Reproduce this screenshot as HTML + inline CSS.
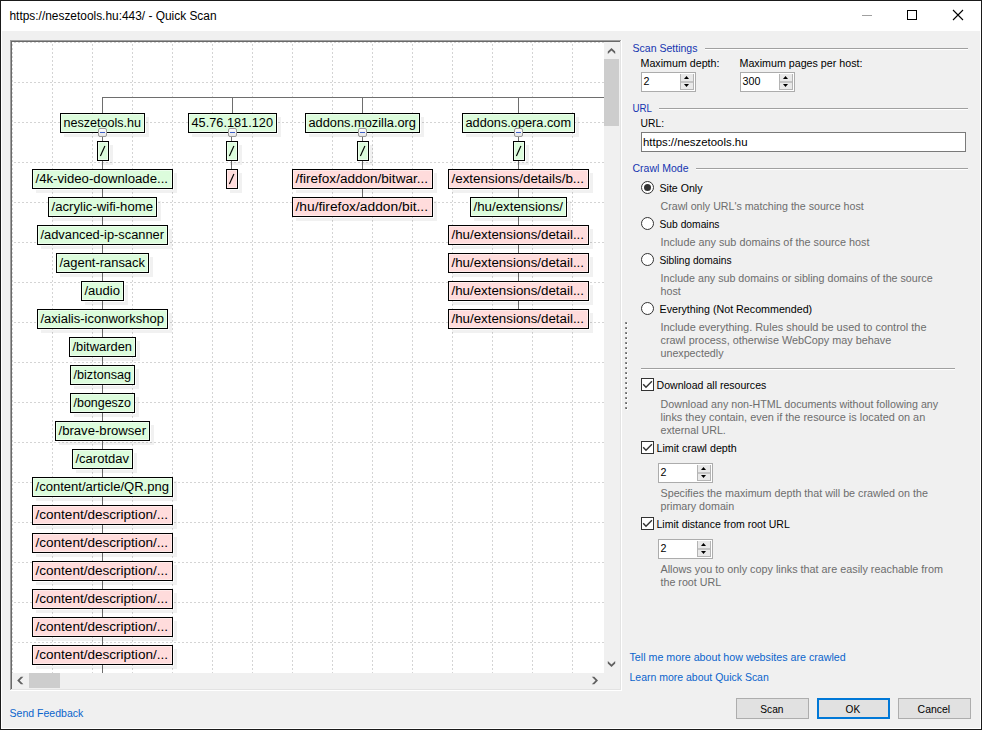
<!DOCTYPE html>
<html><head><meta charset="utf-8"><title>Quick Scan</title>
<style>
html,body{margin:0;padding:0;background:#f0f0f0;width:982px;height:730px;overflow:hidden}
svg{display:block}
text{font-family:"Liberation Sans", sans-serif;white-space:pre}
</style></head><body>
<svg width="982" height="730" viewBox="0 0 982 730" font-family='"Liberation Sans", sans-serif'>
<defs><linearGradient id="cbg" x1="0" y1="0" x2="0" y2="1"><stop offset="0" stop-color="#ffffff"/><stop offset="1" stop-color="#e4e4e4"/></linearGradient></defs>
<rect x="0" y="0" width="982" height="730" fill="#f0f0f0"/>
<g font-size="12"><rect x="12" y="42" width="608" height="647" fill="#fff"/><g stroke="#d4d4d4" stroke-width="1" stroke-dasharray="2 2" stroke-dashoffset="2"><line x1="12.5" y1="42" x2="12.5" y2="673" /><line x1="52.5" y1="42" x2="52.5" y2="673" /><line x1="92.5" y1="42" x2="92.5" y2="673" /><line x1="132.5" y1="42" x2="132.5" y2="673" /><line x1="172.5" y1="42" x2="172.5" y2="673" /><line x1="212.5" y1="42" x2="212.5" y2="673" /><line x1="252.5" y1="42" x2="252.5" y2="673" /><line x1="292.5" y1="42" x2="292.5" y2="673" /><line x1="332.5" y1="42" x2="332.5" y2="673" /><line x1="372.5" y1="42" x2="372.5" y2="673" /><line x1="412.5" y1="42" x2="412.5" y2="673" /><line x1="452.5" y1="42" x2="452.5" y2="673" /><line x1="492.5" y1="42" x2="492.5" y2="673" /><line x1="532.5" y1="42" x2="532.5" y2="673" /><line x1="572.5" y1="42" x2="572.5" y2="673" /><line x1="12" y1="42.5" x2="604" y2="42.5" /><line x1="12" y1="82.5" x2="604" y2="82.5" /><line x1="12" y1="122.5" x2="604" y2="122.5" /><line x1="12" y1="162.5" x2="604" y2="162.5" /><line x1="12" y1="202.5" x2="604" y2="202.5" /><line x1="12" y1="242.5" x2="604" y2="242.5" /><line x1="12" y1="282.5" x2="604" y2="282.5" /><line x1="12" y1="322.5" x2="604" y2="322.5" /><line x1="12" y1="362.5" x2="604" y2="362.5" /><line x1="12" y1="402.5" x2="604" y2="402.5" /><line x1="12" y1="442.5" x2="604" y2="442.5" /><line x1="12" y1="482.5" x2="604" y2="482.5" /><line x1="12" y1="522.5" x2="604" y2="522.5" /><line x1="12" y1="562.5" x2="604" y2="562.5" /><line x1="12" y1="602.5" x2="604" y2="602.5" /><line x1="12" y1="642.5" x2="604" y2="642.5" /></g><rect x="102" y="97" width="502" height="1" fill="#6e6e6e"/><rect x="102" y="97" width="1" height="16" fill="#6e6e6e"/><rect x="232" y="97" width="1" height="16" fill="#6e6e6e"/><rect x="362" y="97" width="1" height="16" fill="#6e6e6e"/><rect x="518" y="97" width="1" height="16" fill="#6e6e6e"/><rect x="102" y="133" width="1" height="540" fill="#6e6e6e"/><rect x="231" y="133" width="1" height="40" fill="#6e6e6e"/><rect x="362" y="133" width="1" height="70" fill="#6e6e6e"/><rect x="518" y="133" width="1" height="180" fill="#6e6e6e"/><rect x="146" y="117" width="3" height="20" fill="#000" fill-opacity="0.055"/><rect x="64" y="134" width="82" height="3" fill="#000" fill-opacity="0.055"/><rect x="60" y="113" width="85" height="20" fill="#000"/><rect x="61" y="114" width="83" height="18" fill="#ecfeec"/><rect x="62" y="115" width="81" height="16" fill="#dcfcdc"/><text x="63.5" y="127" textLength="77.5" lengthAdjust="spacingAndGlyphs">neszetools.hu</text><rect x="278" y="117" width="3" height="20" fill="#000" fill-opacity="0.055"/><rect x="192" y="134" width="86" height="3" fill="#000" fill-opacity="0.055"/><rect x="188" y="113" width="89" height="20" fill="#000"/><rect x="189" y="114" width="87" height="18" fill="#ecfeec"/><rect x="190" y="115" width="85" height="16" fill="#dcfcdc"/><text x="191.5" y="127" textLength="81.5" lengthAdjust="spacingAndGlyphs">45.76.181.120</text><rect x="421" y="117" width="3" height="20" fill="#000" fill-opacity="0.055"/><rect x="309" y="134" width="112" height="3" fill="#000" fill-opacity="0.055"/><rect x="305" y="113" width="115" height="20" fill="#000"/><rect x="306" y="114" width="113" height="18" fill="#ecfeec"/><rect x="307" y="115" width="111" height="16" fill="#dcfcdc"/><text x="308.5" y="127" textLength="107.5" lengthAdjust="spacingAndGlyphs">addons.mozilla.org</text><rect x="576" y="117" width="3" height="20" fill="#000" fill-opacity="0.055"/><rect x="466" y="134" width="110" height="3" fill="#000" fill-opacity="0.055"/><rect x="462" y="113" width="113" height="20" fill="#000"/><rect x="463" y="114" width="111" height="18" fill="#ecfeec"/><rect x="464" y="115" width="109" height="16" fill="#dcfcdc"/><text x="465.5" y="127" textLength="105.5" lengthAdjust="spacingAndGlyphs">addons.opera.com</text><rect x="110" y="145" width="3" height="20" fill="#000" fill-opacity="0.055"/><rect x="101" y="162" width="9" height="3" fill="#000" fill-opacity="0.055"/><rect x="97" y="141" width="12" height="20" fill="#000"/><rect x="98" y="142" width="10" height="18" fill="#ecfeec"/><rect x="99" y="143" width="8" height="16" fill="#dcfcdc"/><path d="M100.4,156 L104.9,146" stroke="#000" stroke-width="1.15" fill="none"/><rect x="239" y="145" width="3" height="20" fill="#000" fill-opacity="0.055"/><rect x="230" y="162" width="9" height="3" fill="#000" fill-opacity="0.055"/><rect x="226" y="141" width="12" height="20" fill="#000"/><rect x="227" y="142" width="10" height="18" fill="#ecfeec"/><rect x="228" y="143" width="8" height="16" fill="#dcfcdc"/><path d="M229.4,156 L233.9,146" stroke="#000" stroke-width="1.15" fill="none"/><rect x="370" y="145" width="3" height="20" fill="#000" fill-opacity="0.055"/><rect x="361" y="162" width="9" height="3" fill="#000" fill-opacity="0.055"/><rect x="357" y="141" width="12" height="20" fill="#000"/><rect x="358" y="142" width="10" height="18" fill="#ecfeec"/><rect x="359" y="143" width="8" height="16" fill="#dcfcdc"/><path d="M360.4,156 L364.9,146" stroke="#000" stroke-width="1.15" fill="none"/><rect x="526" y="145" width="3" height="20" fill="#000" fill-opacity="0.055"/><rect x="517" y="162" width="9" height="3" fill="#000" fill-opacity="0.055"/><rect x="513" y="141" width="12" height="20" fill="#000"/><rect x="514" y="142" width="10" height="18" fill="#ecfeec"/><rect x="515" y="143" width="8" height="16" fill="#dcfcdc"/><path d="M516.4,156 L520.9,146" stroke="#000" stroke-width="1.15" fill="none"/><rect x="174" y="173" width="3" height="20" fill="#000" fill-opacity="0.055"/><rect x="36" y="190" width="138" height="3" fill="#000" fill-opacity="0.055"/><rect x="32" y="169" width="141" height="20" fill="#000"/><rect x="33" y="170" width="139" height="18" fill="#ecfeec"/><rect x="34" y="171" width="137" height="16" fill="#dcfcdc"/><text x="35.5" y="183" textLength="132.5" lengthAdjust="spacingAndGlyphs">/4k-video-downloade...</text><rect x="158" y="201" width="3" height="20" fill="#000" fill-opacity="0.055"/><rect x="52" y="218" width="106" height="3" fill="#000" fill-opacity="0.055"/><rect x="48" y="197" width="109" height="20" fill="#000"/><rect x="49" y="198" width="107" height="18" fill="#ecfeec"/><rect x="50" y="199" width="105" height="16" fill="#dcfcdc"/><text x="51.5" y="211" textLength="101.5" lengthAdjust="spacingAndGlyphs">/acrylic-wifi-home</text><rect x="169" y="229" width="3" height="20" fill="#000" fill-opacity="0.055"/><rect x="41" y="246" width="128" height="3" fill="#000" fill-opacity="0.055"/><rect x="37" y="225" width="131" height="20" fill="#000"/><rect x="38" y="226" width="129" height="18" fill="#ecfeec"/><rect x="39" y="227" width="127" height="16" fill="#dcfcdc"/><text x="40.5" y="239" textLength="123.5" lengthAdjust="spacingAndGlyphs">/advanced-ip-scanner</text><rect x="150" y="257" width="3" height="20" fill="#000" fill-opacity="0.055"/><rect x="60" y="274" width="90" height="3" fill="#000" fill-opacity="0.055"/><rect x="56" y="253" width="93" height="20" fill="#000"/><rect x="57" y="254" width="91" height="18" fill="#ecfeec"/><rect x="58" y="255" width="89" height="16" fill="#dcfcdc"/><text x="59.5" y="267" textLength="85.5" lengthAdjust="spacingAndGlyphs">/agent-ransack</text><rect x="125" y="285" width="3" height="20" fill="#000" fill-opacity="0.055"/><rect x="85" y="302" width="40" height="3" fill="#000" fill-opacity="0.055"/><rect x="81" y="281" width="43" height="20" fill="#000"/><rect x="82" y="282" width="41" height="18" fill="#ecfeec"/><rect x="83" y="283" width="39" height="16" fill="#dcfcdc"/><text x="84.5" y="295" textLength="35.5" lengthAdjust="spacingAndGlyphs">/audio</text><rect x="169" y="313" width="3" height="20" fill="#000" fill-opacity="0.055"/><rect x="41" y="330" width="128" height="3" fill="#000" fill-opacity="0.055"/><rect x="37" y="309" width="131" height="20" fill="#000"/><rect x="38" y="310" width="129" height="18" fill="#ecfeec"/><rect x="39" y="311" width="127" height="16" fill="#dcfcdc"/><text x="40.5" y="323" textLength="123.5" lengthAdjust="spacingAndGlyphs">/axialis-iconworkshop</text><rect x="137" y="341" width="3" height="20" fill="#000" fill-opacity="0.055"/><rect x="73" y="358" width="64" height="3" fill="#000" fill-opacity="0.055"/><rect x="69" y="337" width="67" height="20" fill="#000"/><rect x="70" y="338" width="65" height="18" fill="#ecfeec"/><rect x="71" y="339" width="63" height="16" fill="#dcfcdc"/><text x="72.5" y="351" textLength="59.5" lengthAdjust="spacingAndGlyphs">/bitwarden</text><rect x="136" y="369" width="3" height="20" fill="#000" fill-opacity="0.055"/><rect x="74" y="386" width="62" height="3" fill="#000" fill-opacity="0.055"/><rect x="70" y="365" width="65" height="20" fill="#000"/><rect x="71" y="366" width="63" height="18" fill="#ecfeec"/><rect x="72" y="367" width="61" height="16" fill="#dcfcdc"/><text x="73.5" y="379" textLength="57.5" lengthAdjust="spacingAndGlyphs">/biztonsag</text><rect x="136" y="397" width="3" height="20" fill="#000" fill-opacity="0.055"/><rect x="74" y="414" width="62" height="3" fill="#000" fill-opacity="0.055"/><rect x="70" y="393" width="65" height="20" fill="#000"/><rect x="71" y="394" width="63" height="18" fill="#ecfeec"/><rect x="72" y="395" width="61" height="16" fill="#dcfcdc"/><text x="73.5" y="407" textLength="57.5" lengthAdjust="spacingAndGlyphs">/bongeszo</text><rect x="151" y="425" width="3" height="20" fill="#000" fill-opacity="0.055"/><rect x="59" y="442" width="92" height="3" fill="#000" fill-opacity="0.055"/><rect x="55" y="421" width="95" height="20" fill="#000"/><rect x="56" y="422" width="93" height="18" fill="#ecfeec"/><rect x="57" y="423" width="91" height="16" fill="#dcfcdc"/><text x="58.5" y="435" textLength="87.5" lengthAdjust="spacingAndGlyphs">/brave-browser</text><rect x="134" y="453" width="3" height="20" fill="#000" fill-opacity="0.055"/><rect x="76" y="470" width="58" height="3" fill="#000" fill-opacity="0.055"/><rect x="72" y="449" width="61" height="20" fill="#000"/><rect x="73" y="450" width="59" height="18" fill="#ecfeec"/><rect x="74" y="451" width="57" height="16" fill="#dcfcdc"/><text x="75.5" y="463" textLength="53.5" lengthAdjust="spacingAndGlyphs">/carotdav</text><rect x="174" y="481" width="3" height="20" fill="#000" fill-opacity="0.055"/><rect x="36" y="498" width="138" height="3" fill="#000" fill-opacity="0.055"/><rect x="32" y="477" width="141" height="20" fill="#000"/><rect x="33" y="478" width="139" height="18" fill="#ecfeec"/><rect x="34" y="479" width="137" height="16" fill="#dcfcdc"/><text x="35.5" y="491" textLength="133.5" lengthAdjust="spacingAndGlyphs">/content/article/QR.png</text><rect x="174" y="509" width="3" height="20" fill="#000" fill-opacity="0.055"/><rect x="36" y="526" width="138" height="3" fill="#000" fill-opacity="0.055"/><rect x="32" y="505" width="141" height="20" fill="#000"/><rect x="33" y="506" width="139" height="18" fill="#ffeaea"/><rect x="34" y="507" width="137" height="16" fill="#ffdcdc"/><text x="35.5" y="519" textLength="132.5" lengthAdjust="spacingAndGlyphs">/content/description/...</text><rect x="174" y="537" width="3" height="20" fill="#000" fill-opacity="0.055"/><rect x="36" y="554" width="138" height="3" fill="#000" fill-opacity="0.055"/><rect x="32" y="533" width="141" height="20" fill="#000"/><rect x="33" y="534" width="139" height="18" fill="#ffeaea"/><rect x="34" y="535" width="137" height="16" fill="#ffdcdc"/><text x="35.5" y="547" textLength="132.5" lengthAdjust="spacingAndGlyphs">/content/description/...</text><rect x="174" y="565" width="3" height="20" fill="#000" fill-opacity="0.055"/><rect x="36" y="582" width="138" height="3" fill="#000" fill-opacity="0.055"/><rect x="32" y="561" width="141" height="20" fill="#000"/><rect x="33" y="562" width="139" height="18" fill="#ffeaea"/><rect x="34" y="563" width="137" height="16" fill="#ffdcdc"/><text x="35.5" y="575" textLength="132.5" lengthAdjust="spacingAndGlyphs">/content/description/...</text><rect x="174" y="593" width="3" height="20" fill="#000" fill-opacity="0.055"/><rect x="36" y="610" width="138" height="3" fill="#000" fill-opacity="0.055"/><rect x="32" y="589" width="141" height="20" fill="#000"/><rect x="33" y="590" width="139" height="18" fill="#ffeaea"/><rect x="34" y="591" width="137" height="16" fill="#ffdcdc"/><text x="35.5" y="603" textLength="132.5" lengthAdjust="spacingAndGlyphs">/content/description/...</text><rect x="174" y="621" width="3" height="20" fill="#000" fill-opacity="0.055"/><rect x="36" y="638" width="138" height="3" fill="#000" fill-opacity="0.055"/><rect x="32" y="617" width="141" height="20" fill="#000"/><rect x="33" y="618" width="139" height="18" fill="#ffeaea"/><rect x="34" y="619" width="137" height="16" fill="#ffdcdc"/><text x="35.5" y="631" textLength="132.5" lengthAdjust="spacingAndGlyphs">/content/description/...</text><rect x="174" y="649" width="3" height="20" fill="#000" fill-opacity="0.055"/><rect x="36" y="666" width="138" height="3" fill="#000" fill-opacity="0.055"/><rect x="32" y="645" width="141" height="20" fill="#000"/><rect x="33" y="646" width="139" height="18" fill="#ffeaea"/><rect x="34" y="647" width="137" height="16" fill="#ffdcdc"/><text x="35.5" y="659" textLength="132.5" lengthAdjust="spacingAndGlyphs">/content/description/...</text><rect x="239" y="173" width="3" height="20" fill="#000" fill-opacity="0.055"/><rect x="230" y="190" width="9" height="3" fill="#000" fill-opacity="0.055"/><rect x="226" y="169" width="12" height="20" fill="#000"/><rect x="227" y="170" width="10" height="18" fill="#ffeaea"/><rect x="228" y="171" width="8" height="16" fill="#ffdcdc"/><path d="M229.4,184 L233.9,174" stroke="#000" stroke-width="1.15" fill="none"/><rect x="434" y="173" width="3" height="20" fill="#000" fill-opacity="0.055"/><rect x="296" y="190" width="138" height="3" fill="#000" fill-opacity="0.055"/><rect x="292" y="169" width="141" height="20" fill="#000"/><rect x="293" y="170" width="139" height="18" fill="#ffeaea"/><rect x="294" y="171" width="137" height="16" fill="#ffdcdc"/><text x="295.5" y="183" textLength="132.5" lengthAdjust="spacingAndGlyphs">/firefox/addon/bitwar...</text><rect x="434" y="201" width="3" height="20" fill="#000" fill-opacity="0.055"/><rect x="296" y="218" width="138" height="3" fill="#000" fill-opacity="0.055"/><rect x="292" y="197" width="141" height="20" fill="#000"/><rect x="293" y="198" width="139" height="18" fill="#ffeaea"/><rect x="294" y="199" width="137" height="16" fill="#ffdcdc"/><text x="295.5" y="211" textLength="132.5" lengthAdjust="spacingAndGlyphs">/hu/firefox/addon/bit...</text><rect x="590" y="173" width="3" height="20" fill="#000" fill-opacity="0.055"/><rect x="452" y="190" width="138" height="3" fill="#000" fill-opacity="0.055"/><rect x="448" y="169" width="141" height="20" fill="#000"/><rect x="449" y="170" width="139" height="18" fill="#ffeaea"/><rect x="450" y="171" width="137" height="16" fill="#ffdcdc"/><text x="451.5" y="183" textLength="132.5" lengthAdjust="spacingAndGlyphs">/extensions/details/b...</text><rect x="568" y="201" width="3" height="20" fill="#000" fill-opacity="0.055"/><rect x="474" y="218" width="94" height="3" fill="#000" fill-opacity="0.055"/><rect x="470" y="197" width="97" height="20" fill="#000"/><rect x="471" y="198" width="95" height="18" fill="#ecfeec"/><rect x="472" y="199" width="93" height="16" fill="#dcfcdc"/><text x="473.5" y="211" textLength="89.5" lengthAdjust="spacingAndGlyphs">/hu/extensions/</text><rect x="590" y="229" width="3" height="20" fill="#000" fill-opacity="0.055"/><rect x="452" y="246" width="138" height="3" fill="#000" fill-opacity="0.055"/><rect x="448" y="225" width="141" height="20" fill="#000"/><rect x="449" y="226" width="139" height="18" fill="#ffeaea"/><rect x="450" y="227" width="137" height="16" fill="#ffdcdc"/><text x="451.5" y="239" textLength="132.5" lengthAdjust="spacingAndGlyphs">/hu/extensions/detail...</text><rect x="590" y="257" width="3" height="20" fill="#000" fill-opacity="0.055"/><rect x="452" y="274" width="138" height="3" fill="#000" fill-opacity="0.055"/><rect x="448" y="253" width="141" height="20" fill="#000"/><rect x="449" y="254" width="139" height="18" fill="#ffeaea"/><rect x="450" y="255" width="137" height="16" fill="#ffdcdc"/><text x="451.5" y="267" textLength="132.5" lengthAdjust="spacingAndGlyphs">/hu/extensions/detail...</text><rect x="590" y="285" width="3" height="20" fill="#000" fill-opacity="0.055"/><rect x="452" y="302" width="138" height="3" fill="#000" fill-opacity="0.055"/><rect x="448" y="281" width="141" height="20" fill="#000"/><rect x="449" y="282" width="139" height="18" fill="#ffeaea"/><rect x="450" y="283" width="137" height="16" fill="#ffdcdc"/><text x="451.5" y="295" textLength="132.5" lengthAdjust="spacingAndGlyphs">/hu/extensions/detail...</text><rect x="590" y="313" width="3" height="20" fill="#000" fill-opacity="0.055"/><rect x="452" y="330" width="138" height="3" fill="#000" fill-opacity="0.055"/><rect x="448" y="309" width="141" height="20" fill="#000"/><rect x="449" y="310" width="139" height="18" fill="#ffeaea"/><rect x="450" y="311" width="137" height="16" fill="#ffdcdc"/><text x="451.5" y="323" textLength="132.5" lengthAdjust="spacingAndGlyphs">/hu/extensions/detail...</text><rect x="98.5" y="128.5" width="8" height="8" rx="1.5" fill="url(#cbg)" stroke="#9a9a9a"/><rect x="100" y="132" width="5" height="1" fill="#3d5fc4"/><rect x="228.5" y="128.5" width="8" height="8" rx="1.5" fill="url(#cbg)" stroke="#9a9a9a"/><rect x="230" y="132" width="5" height="1" fill="#3d5fc4"/><rect x="358.5" y="128.5" width="8" height="8" rx="1.5" fill="url(#cbg)" stroke="#9a9a9a"/><rect x="360" y="132" width="5" height="1" fill="#3d5fc4"/><rect x="514.5" y="128.5" width="8" height="8" rx="1.5" fill="url(#cbg)" stroke="#9a9a9a"/><rect x="516" y="132" width="5" height="1" fill="#3d5fc4"/><rect x="604" y="42" width="16" height="631" fill="#f0f0f0"/><rect x="604" y="59" width="15" height="67" fill="#cdcdcd"/><polygon points="607.8,51.6 611.5,47.9 615.2,51.6 615.2,54.1 611.5,50.4 607.8,54.1" fill="#606060"/><polygon points="607.8,660.9 611.5,664.6 615.2,660.9 615.2,663.4 611.5,667.1 607.8,663.4" fill="#606060"/><rect x="12" y="673" width="608" height="16" fill="#f0f0f0"/><rect x="29" y="673" width="31" height="15" fill="#cdcdcd"/><polygon points="23.4,676.8 20.9,676.8 17.2,680.5 20.9,684.2 23.4,684.2 19.7,680.5" fill="#606060"/><polygon points="591.8,676.8 594.3,676.8 598.0,680.5 594.3,684.2 591.8,684.2 595.5,680.5" fill="#606060"/><rect x="10" y="40" width="611" height="1" fill="#a0a0a0"/><rect x="10" y="40" width="1" height="650" fill="#a0a0a0"/><rect x="11" y="41" width="609" height="1" fill="#696969"/><rect x="11" y="41" width="1" height="648" fill="#696969"/><rect x="10" y="690" width="612" height="1" fill="#ffffff"/><rect x="621" y="40" width="1" height="651" fill="#ffffff"/><rect x="11" y="689" width="610" height="1" fill="#e3e3e3"/><rect x="620" y="41" width="1" height="649" fill="#e3e3e3"/></g>
<text x="632.5" y="52" fill="#1535b0" font-size="10.7"  textLength="65" lengthAdjust="spacingAndGlyphs">Scan Settings</text><rect x="705" y="48" width="263" height="1" fill="#a0a0a0"/><rect x="705" y="49" width="263" height="1" fill="#ffffff"/><text x="640.5" y="67" fill="#000" font-size="10.7" >Maximum depth:</text><rect x="641.5" y="72.5" width="54" height="19" fill="#fff" stroke="#acacac"/><rect x="680" y="74" width="14" height="16" fill="#e9e9e9"/><rect x="680" y="74" width="1" height="16" fill="#b4b4b4"/><rect x="693" y="74" width="1" height="16" fill="#b4b4b4"/><rect x="680" y="89" width="14" height="1" fill="#b4b4b4"/><rect x="681" y="81" width="12" height="2" fill="#c4c4c4"/><polygon points="684,79 689,79 686.5,76" fill="#000"/><polygon points="684,84 689,84 686.5,87" fill="#000"/><text x="643.5" y="84.5" fill="#000" font-size="10.7" >2</text><text x="739.5" y="67" fill="#000" font-size="10.7" >Maximum pages per host:</text><rect x="740.5" y="72.5" width="54" height="19" fill="#fff" stroke="#acacac"/><rect x="779" y="74" width="14" height="16" fill="#e9e9e9"/><rect x="779" y="74" width="1" height="16" fill="#b4b4b4"/><rect x="792" y="74" width="1" height="16" fill="#b4b4b4"/><rect x="779" y="89" width="14" height="1" fill="#b4b4b4"/><rect x="780" y="81" width="12" height="2" fill="#c4c4c4"/><polygon points="783,79 788,79 785.5,76" fill="#000"/><polygon points="783,84 788,84 785.5,87" fill="#000"/><text x="742.5" y="84.5" fill="#000" font-size="10.7" >300</text><text x="632.5" y="112" fill="#1535b0" font-size="10.7"  textLength="19.5" lengthAdjust="spacingAndGlyphs">URL</text><rect x="659" y="108" width="309" height="1" fill="#a0a0a0"/><rect x="659" y="109" width="309" height="1" fill="#ffffff"/><text x="640.5" y="127" fill="#000" font-size="10.7"  textLength="23.5" lengthAdjust="spacingAndGlyphs">URL:</text><rect x="641.5" y="132.5" width="324" height="19" fill="#fff" stroke="#7a7a7a"/><text x="643" y="146" fill="#000" font-size="11.2"  textLength="104.5" lengthAdjust="spacingAndGlyphs">https://neszetools.hu</text><text x="632.5" y="172" fill="#1535b0" font-size="10.7"  textLength="56" lengthAdjust="spacingAndGlyphs">Crawl Mode</text><rect x="696" y="168" width="272" height="1" fill="#a0a0a0"/><rect x="696" y="169" width="272" height="1" fill="#ffffff"/><circle cx="647.5" cy="187.5" r="6" fill="#fff" stroke="#333" stroke-width="1"/><circle cx="647.5" cy="187.5" r="3.5" fill="#333"/><text x="659.5" y="192" fill="#000" font-size="10.7"  textLength="43" lengthAdjust="spacingAndGlyphs">Site Only</text><text x="660.5" y="209.5" fill="#6d6d6d" font-size="10.7"  textLength="203.2" lengthAdjust="spacingAndGlyphs">Crawl only URL's matching the source host</text><circle cx="647.5" cy="223.5" r="6" fill="#fff" stroke="#333" stroke-width="1"/><text x="659.5" y="228" fill="#000" font-size="10.7"  textLength="60" lengthAdjust="spacingAndGlyphs">Sub domains</text><text x="660.5" y="245.5" fill="#6d6d6d" font-size="10.7"  textLength="209" lengthAdjust="spacingAndGlyphs">Include any sub domains of the source host</text><circle cx="647.5" cy="259.5" r="6" fill="#fff" stroke="#333" stroke-width="1"/><text x="659.5" y="264" fill="#000" font-size="10.7"  textLength="72" lengthAdjust="spacingAndGlyphs">Sibling domains</text><text x="660.5" y="281.5" fill="#6d6d6d" font-size="10.7" >Include any sub domains or sibling domains of the source</text><text x="660.5" y="294.5" fill="#6d6d6d" font-size="10.7" >host</text><circle cx="647.5" cy="308.5" r="6" fill="#fff" stroke="#333" stroke-width="1"/><text x="659.5" y="313" fill="#000" font-size="10.7" >Everything (Not Recommended)</text><text x="660.5" y="331" fill="#6d6d6d" font-size="10.7"  textLength="266" lengthAdjust="spacingAndGlyphs">Include everything. Rules should be used to control the</text><text x="660.5" y="344" fill="#6d6d6d" font-size="10.7"  textLength="230.7" lengthAdjust="spacingAndGlyphs">crawl process, otherwise WebCopy may behave</text><text x="660.5" y="357" fill="#6d6d6d" font-size="10.7" >unexpectedly</text><rect x="641" y="368" width="314" height="1" fill="#a0a0a0"/><rect x="641" y="369" width="314" height="1" fill="#ffffff"/><rect x="641.5" y="378.5" width="12" height="12" fill="#fff" stroke="#333"/><polyline points="643.2,384.2 646,387.2 651.9,381.3" fill="none" stroke="#333" stroke-width="1.4"/><text x="656.5" y="389" fill="#000" font-size="10.7"  textLength="109.8" lengthAdjust="spacingAndGlyphs">Download all resources</text><text x="660.5" y="407.5" fill="#6d6d6d" font-size="10.7" >Download any non-HTML documents without following any</text><text x="660.5" y="420.5" fill="#6d6d6d" font-size="10.7"  textLength="264.7" lengthAdjust="spacingAndGlyphs">links they contain, even if the resource is located on an</text><text x="660.5" y="433.5" fill="#6d6d6d" font-size="10.7" >external URL.</text><rect x="641.5" y="441.5" width="12" height="12" fill="#fff" stroke="#333"/><polyline points="643.2,447.2 646,450.2 651.9,444.3" fill="none" stroke="#333" stroke-width="1.4"/><text x="656.5" y="451.5" fill="#000" font-size="10.7" >Limit crawl depth</text><rect x="658.5" y="463.5" width="54" height="19" fill="#fff" stroke="#acacac"/><rect x="697" y="465" width="14" height="16" fill="#e9e9e9"/><rect x="697" y="465" width="1" height="16" fill="#b4b4b4"/><rect x="710" y="465" width="1" height="16" fill="#b4b4b4"/><rect x="697" y="480" width="14" height="1" fill="#b4b4b4"/><rect x="698" y="472" width="12" height="2" fill="#c4c4c4"/><polygon points="701,470 706,470 703.5,467" fill="#000"/><polygon points="701,475 706,475 703.5,478" fill="#000"/><text x="660.5" y="475.5" fill="#000" font-size="10.7" >2</text><text x="660.5" y="496.5" fill="#6d6d6d" font-size="10.7"  textLength="267.4" lengthAdjust="spacingAndGlyphs">Specifies the maximum depth that will be crawled on the</text><text x="660.5" y="509.5" fill="#6d6d6d" font-size="10.7" >primary domain</text><rect x="641.5" y="517.5" width="12" height="12" fill="#fff" stroke="#333"/><polyline points="643.2,523.2 646,526.2 651.9,520.3" fill="none" stroke="#333" stroke-width="1.4"/><text x="656.5" y="528" fill="#000" font-size="10.7"  textLength="133.3" lengthAdjust="spacingAndGlyphs">Limit distance from root URL</text><rect x="658.5" y="539.5" width="54" height="19" fill="#fff" stroke="#acacac"/><rect x="697" y="541" width="14" height="16" fill="#e9e9e9"/><rect x="697" y="541" width="1" height="16" fill="#b4b4b4"/><rect x="710" y="541" width="1" height="16" fill="#b4b4b4"/><rect x="697" y="556" width="14" height="1" fill="#b4b4b4"/><rect x="698" y="548" width="12" height="2" fill="#c4c4c4"/><polygon points="701,546 706,546 703.5,543" fill="#000"/><polygon points="701,551 706,551 703.5,554" fill="#000"/><text x="660.5" y="551.5" fill="#000" font-size="10.7" >2</text><text x="660.5" y="573" fill="#6d6d6d" font-size="10.7"  textLength="282.5" lengthAdjust="spacingAndGlyphs">Allows you to only copy links that are easily reachable from</text><text x="660.5" y="586" fill="#6d6d6d" font-size="10.7" >the root URL</text><text x="629.5" y="661" fill="#0a64cc" font-size="10.7" >Tell me more about how websites are crawled</text><text x="629.5" y="681" fill="#0a64cc" font-size="10.7"  textLength="139.3" lengthAdjust="spacingAndGlyphs">Learn more about Quick Scan</text><text x="9.5" y="716.5" fill="#0a64cc" font-size="10.7"  textLength="73.8" lengthAdjust="spacingAndGlyphs">Send Feedback</text><rect x="625" y="322" width="2" height="2" fill="#8a8a8a"/><rect x="626" y="323" width="1" height="1" fill="#5e5e5e"/><rect x="627" y="323" width="1" height="2" fill="#fff"/><rect x="626" y="324" width="1" height="1" fill="#fff"/><rect x="625" y="327" width="2" height="2" fill="#8a8a8a"/><rect x="626" y="328" width="1" height="1" fill="#5e5e5e"/><rect x="627" y="328" width="1" height="2" fill="#fff"/><rect x="626" y="329" width="1" height="1" fill="#fff"/><rect x="625" y="332" width="2" height="2" fill="#8a8a8a"/><rect x="626" y="333" width="1" height="1" fill="#5e5e5e"/><rect x="627" y="333" width="1" height="2" fill="#fff"/><rect x="626" y="334" width="1" height="1" fill="#fff"/><rect x="625" y="337" width="2" height="2" fill="#8a8a8a"/><rect x="626" y="338" width="1" height="1" fill="#5e5e5e"/><rect x="627" y="338" width="1" height="2" fill="#fff"/><rect x="626" y="339" width="1" height="1" fill="#fff"/><rect x="625" y="342" width="2" height="2" fill="#8a8a8a"/><rect x="626" y="343" width="1" height="1" fill="#5e5e5e"/><rect x="627" y="343" width="1" height="2" fill="#fff"/><rect x="626" y="344" width="1" height="1" fill="#fff"/><rect x="625" y="347" width="2" height="2" fill="#8a8a8a"/><rect x="626" y="348" width="1" height="1" fill="#5e5e5e"/><rect x="627" y="348" width="1" height="2" fill="#fff"/><rect x="626" y="349" width="1" height="1" fill="#fff"/><rect x="625" y="352" width="2" height="2" fill="#8a8a8a"/><rect x="626" y="353" width="1" height="1" fill="#5e5e5e"/><rect x="627" y="353" width="1" height="2" fill="#fff"/><rect x="626" y="354" width="1" height="1" fill="#fff"/><rect x="625" y="357" width="2" height="2" fill="#8a8a8a"/><rect x="626" y="358" width="1" height="1" fill="#5e5e5e"/><rect x="627" y="358" width="1" height="2" fill="#fff"/><rect x="626" y="359" width="1" height="1" fill="#fff"/><rect x="625" y="362" width="2" height="2" fill="#8a8a8a"/><rect x="626" y="363" width="1" height="1" fill="#5e5e5e"/><rect x="627" y="363" width="1" height="2" fill="#fff"/><rect x="626" y="364" width="1" height="1" fill="#fff"/><rect x="625" y="367" width="2" height="2" fill="#8a8a8a"/><rect x="626" y="368" width="1" height="1" fill="#5e5e5e"/><rect x="627" y="368" width="1" height="2" fill="#fff"/><rect x="626" y="369" width="1" height="1" fill="#fff"/><rect x="625" y="372" width="2" height="2" fill="#8a8a8a"/><rect x="626" y="373" width="1" height="1" fill="#5e5e5e"/><rect x="627" y="373" width="1" height="2" fill="#fff"/><rect x="626" y="374" width="1" height="1" fill="#fff"/><rect x="625" y="377" width="2" height="2" fill="#8a8a8a"/><rect x="626" y="378" width="1" height="1" fill="#5e5e5e"/><rect x="627" y="378" width="1" height="2" fill="#fff"/><rect x="626" y="379" width="1" height="1" fill="#fff"/><rect x="625" y="382" width="2" height="2" fill="#8a8a8a"/><rect x="626" y="383" width="1" height="1" fill="#5e5e5e"/><rect x="627" y="383" width="1" height="2" fill="#fff"/><rect x="626" y="384" width="1" height="1" fill="#fff"/><rect x="625" y="387" width="2" height="2" fill="#8a8a8a"/><rect x="626" y="388" width="1" height="1" fill="#5e5e5e"/><rect x="627" y="388" width="1" height="2" fill="#fff"/><rect x="626" y="389" width="1" height="1" fill="#fff"/><rect x="625" y="392" width="2" height="2" fill="#8a8a8a"/><rect x="626" y="393" width="1" height="1" fill="#5e5e5e"/><rect x="627" y="393" width="1" height="2" fill="#fff"/><rect x="626" y="394" width="1" height="1" fill="#fff"/><rect x="625" y="397" width="2" height="2" fill="#8a8a8a"/><rect x="626" y="398" width="1" height="1" fill="#5e5e5e"/><rect x="627" y="398" width="1" height="2" fill="#fff"/><rect x="626" y="399" width="1" height="1" fill="#fff"/><rect x="625" y="402" width="2" height="2" fill="#8a8a8a"/><rect x="626" y="403" width="1" height="1" fill="#5e5e5e"/><rect x="627" y="403" width="1" height="2" fill="#fff"/><rect x="626" y="404" width="1" height="1" fill="#fff"/><rect x="625" y="407" width="2" height="2" fill="#8a8a8a"/><rect x="626" y="408" width="1" height="1" fill="#5e5e5e"/><rect x="627" y="408" width="1" height="2" fill="#fff"/><rect x="626" y="409" width="1" height="1" fill="#fff"/><rect x="736.5" y="698.5" width="72" height="20" fill="#e1e1e1" stroke="#adadad"/><text x="771.9" y="712.5" text-anchor="middle" font-size="10.7" fill="#000" textLength="23.2" lengthAdjust="spacingAndGlyphs">Scan</text><rect x="818" y="699" width="71" height="19" fill="#e1e1e1" stroke="#0078d7" stroke-width="2"/><text x="852.9" y="712.5" text-anchor="middle" font-size="10.7" fill="#000" textLength="14.6" lengthAdjust="spacingAndGlyphs">OK</text><rect x="898.5" y="698.5" width="72" height="20" fill="#e1e1e1" stroke="#adadad"/><text x="933.9" y="712.5" text-anchor="middle" font-size="10.7" fill="#000" textLength="32.6" lengthAdjust="spacingAndGlyphs">Cancel</text>
<rect x="0" y="0" width="982" height="31" fill="#fff"/><text x="9.5" y="20.2" fill="#000" font-size="12"  textLength="207" lengthAdjust="spacingAndGlyphs">https://neszetools.hu:443/ - Quick Scan</text><rect x="862" y="15" width="10" height="1" fill="#a0a0a0"/><rect x="907.5" y="10.5" width="9" height="9" fill="none" stroke="#000"/><path d="M953,10 L963,20 M963,10 L953,20" stroke="#000" stroke-width="1.1"/><rect x="0" y="0" width="982" height="1" fill="#1a1a1a"/><rect x="0" y="0" width="1" height="730" fill="#1a1a1a"/><rect x="981" y="0" width="1" height="730" fill="#1a1a1a"/><rect x="0" y="729" width="982" height="1" fill="#1a1a1a"/><rect x="1" y="31" width="1" height="698" fill="#fff"/><rect x="980" y="31" width="1" height="698" fill="#fff"/><rect x="1" y="728" width="980" height="1" fill="#fff"/>
</svg>
</body></html>
